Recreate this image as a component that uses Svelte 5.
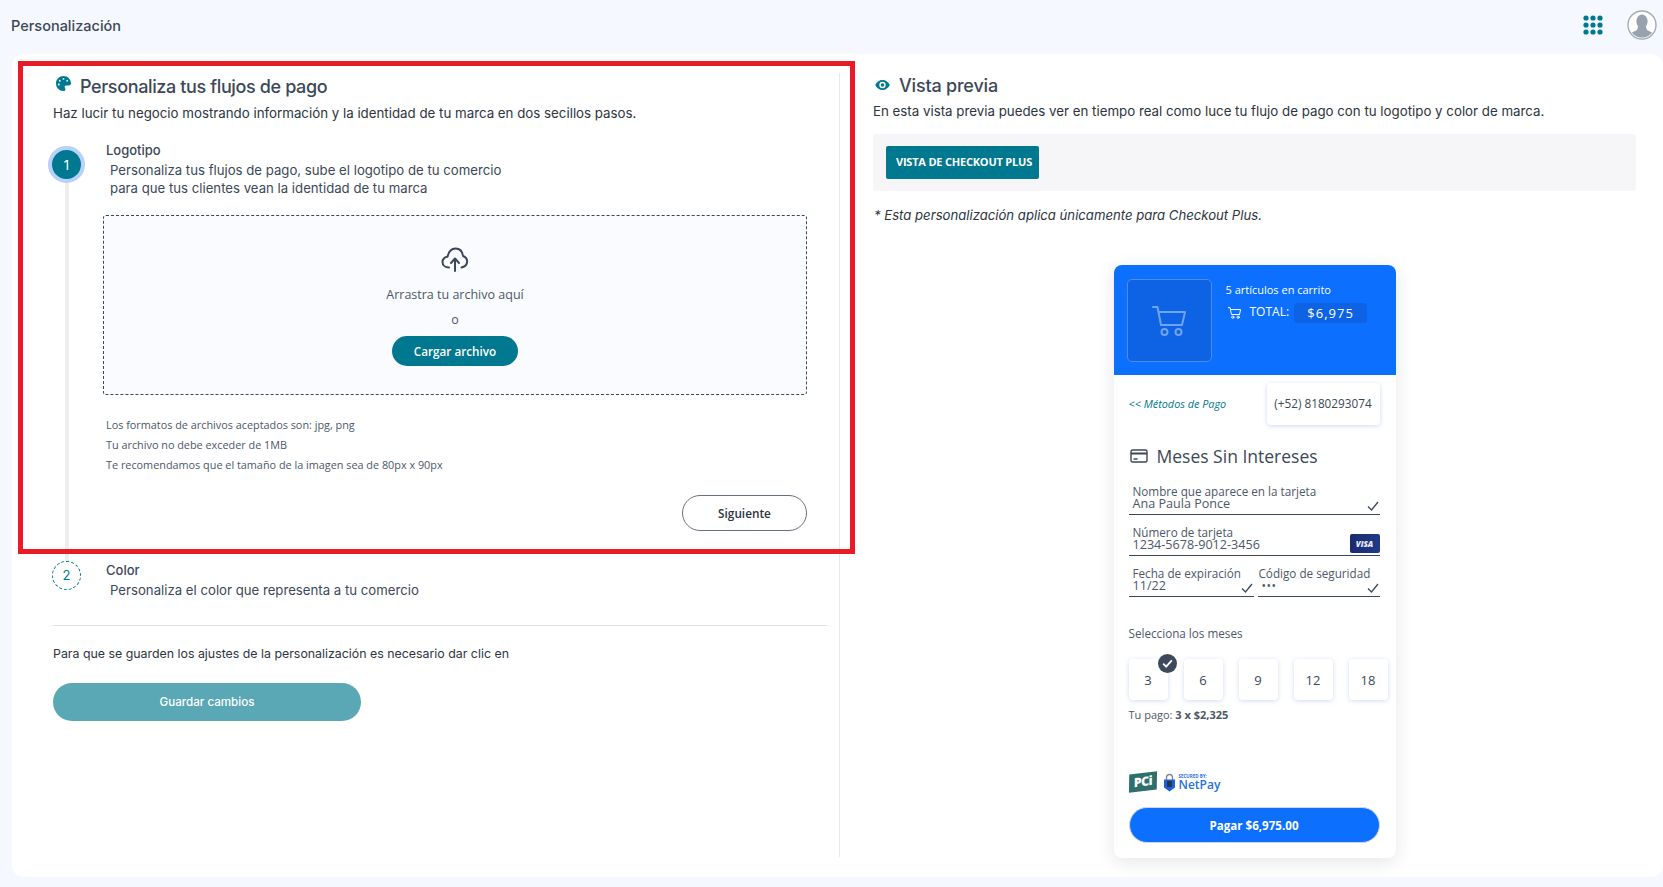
<script lang="ts">
  const months = [3, 6, 9, 12, 18];
  const notes = [
    'Los formatos de archivos aceptados son: jpg, png',
    'Tu archivo no debe exceder de 1MB',
    'Te recomendamos que el tamaño de la imagen sea de 80px x 90px'
  ];
</script>

<div class="page">
  <header class="topbar">
    <span class="topbar__title">Personalización</span>
    <div class="topbar__actions">
      <svg class="apps" viewBox="0 0 20 20" width="20" height="20" aria-label="Aplicaciones">
        {#each [3, 10, 17] as cy}
          {#each [3, 10, 17] as cx}
            <circle {cx} {cy} r="2.6" fill="#00788f" />
          {/each}
        {/each}
      </svg>
      <svg class="avatar" viewBox="0 0 30 30" width="30" height="30" aria-label="Perfil">
        <defs><clipPath id="avatar-clip"><circle cx="15" cy="15" r="12.6" /></clipPath></defs>
        <circle cx="15" cy="15" r="14" fill="#fff" stroke="#a3abb5" stroke-width="1.4" />
        <g clip-path="url(#avatar-clip)" fill="#98a2ae">
          <ellipse cx="15" cy="11.5" rx="5.6" ry="7" />
          <path d="M11 17h8l1 3 6 3v7H4v-7l6-3z" />
        </g>
      </svg>
    </div>
  </header>

  <main class="panel">
    <section class="editor">
      <div class="heading">
        <svg class="heading__palette" viewBox="0 0 512 512" width="15" height="15">
          <path fill="#00788f" d="M512 256c0 .9 0 1.8 0 2.7c-.4 36.5-33.6 61.3-70.1 61.3H344c-26.5 0-48 21.5-48 48c0 3.4 .4 6.7 1 9.9c2.1 10.2 6.5 20 10.8 29.9c6.1 13.8 12.1 27.5 12.1 42c0 31.8-21.6 60.7-53.4 62c-3.5 .1-7 .2-10.6 .2C114.6 512 0 397.4 0 256S114.6 0 256 0S512 114.6 512 256zM128 288a32 32 0 1 0 -64 0 32 32 0 1 0 64 0zm0-96a32 32 0 1 0 0-64 32 32 0 1 0 0 64zM288 96a32 32 0 1 0 -64 0 32 32 0 1 0 64 0zm96 96a32 32 0 1 0 0-64 32 32 0 1 0 0 64z" />
        </svg>
        <h1>Personaliza tus flujos de pago</h1>
      </div>
      <p class="lead">Haz lucir tu negocio mostrando información y la identidad de tu marca en dos secillos pasos.</p>

      <div class="step step--open">
        <div class="step__rail">
          <span class="step__num step__num--active">1</span>
          <span class="step__line"></span>
        </div>
        <div class="step__body">
          <h2>Logotipo</h2>
          <p class="step__desc">Personaliza tus flujos de pago, sube el logotipo de tu comercio<br />para que tus clientes vean la identidad de tu marca</p>

          <div class="dropzone">
            <svg viewBox="0 0 28 25" width="28" height="25" fill="none" stroke="#3c4858" stroke-width="2" stroke-linecap="round" stroke-linejoin="round">
              <path d="M8 20.500C4 20.500 1.500 18 1.500 15C1.500 12 4 9.800 6.500 9.800C7.500 5 10.500 1.500 14.500 1.500C19 1.500 21.500 5 22 9C24.500 10 26.500 12.500 26 15.500C25.500 18.500 23 20 20.500 20.500" />
              <path d="M14 24V12M10 16l4-4.500 4 4.500" />
            </svg>
            <span class="dropzone__text">Arrastra tu archivo aquí</span>
            <span class="dropzone__or">o</span>
            <button class="btn-upload">Cargar archivo</button>
          </div>

          <ul class="notes">
            {#each notes as note}
              <li>{note}</li>
            {/each}
          </ul>

          <div class="step__actions">
            <button class="btn-next">Siguiente</button>
          </div>
        </div>
      </div>

      <div class="step">
        <div class="step__rail">
          <span class="step__num step__num--idle">2</span>
        </div>
        <div class="step__body">
          <h2>Color</h2>
          <p class="step__desc step__desc--single">Personaliza el color que representa a tu comercio</p>
        </div>
      </div>

      <hr />
      <p class="save-hint">Para que se guarden los ajustes de la personalización es necesario dar clic en</p>
      <button class="btn-save">Guardar cambios</button>
    </section>

    <div class="divider"></div>

    <section class="preview">
      <div class="heading heading--preview">
        <svg viewBox="0 0 16 11" width="15" height="10">
          <path fill="#00788f" fill-rule="evenodd" d="M8 0c3.6 0 6.6 2.3 8 5.5C14.600 8.700 11.600 11 8 11S1.400 8.700 0 5.500C1.400 2.300 4.400 0 8 0zm0 2a3.500 3.500 0 1 0 0 7 3.500 3.500 0 0 0 0-7z" />
          <circle cx="8" cy="5.500" r="2" fill="#00788f" />
        </svg>
        <h1>Vista previa</h1>
      </div>
      <p class="lead lead--preview">En esta vista previa puedes ver en tiempo real como luce tu flujo de pago con tu logotipo y color de marca.</p>

      <div class="tabs">
        <button class="tabs__btn">VISTA DE CHECKOUT PLUS</button>
      </div>
      <p class="scope">* Esta personalización aplica únicamente para Checkout Plus.</p>

      <article class="checkout">
        <div class="checkout__head">
          <div class="logo-box">
            <svg viewBox="0 0 34 30" width="34" height="30" fill="none" stroke="#6ea3f0" stroke-width="2" stroke-linecap="round" stroke-linejoin="round">
              <path d="M1 1h4.500l3.500 18h21M6.500 6h26.500l-3 13" />
              <circle cx="12.500" cy="26" r="3" />
              <circle cx="26.500" cy="26" r="3" />
            </svg>
          </div>
          <div class="summary">
            <span class="summary__count">5 artículos en carrito</span>
            <div class="summary__total">
              <svg viewBox="0 0 34 30" width="13" height="12" fill="none" stroke="#fff" stroke-width="2.600" stroke-linecap="round" stroke-linejoin="round">
                <path d="M1 1h4.500l3.500 18h21M6.500 6h26.500l-3 13" />
                <circle cx="12.500" cy="26" r="3" />
                <circle cx="26.500" cy="26" r="3" />
              </svg>
              <span>TOTAL:</span>
              <span class="summary__amount">$6,975</span>
            </div>
          </div>
        </div>

        <div class="checkout__body">
          <div class="checkout__nav">
            <span class="back">&lt;&lt; Métodos de Pago</span>
            <span class="phone">(+52) 8180293074</span>
          </div>

          <div class="method">
            <svg viewBox="0 0 18 14" width="18" height="14" fill="none" stroke="#3c4858" stroke-width="1.400">
              <rect x="1" y="1" width="16" height="12" rx="1.500" />
              <path d="M1 4.500h16" stroke-width="2" />
              <path d="M3.500 10h4" />
            </svg>
            <h3>Meses Sin Intereses</h3>
          </div>

          <div class="field">
            <label for="f-name">Nombre que aparece en la tarjeta</label>
            <span id="f-name" class="field__value">Ana Paula Ponce</span>
            <svg class="tick" viewBox="0 0 12 10" width="12" height="10"><path d="M1 5.500l3.500 3.500L11 1" fill="none" stroke="#3c4858" stroke-width="1.300" /></svg>
          </div>
          <div class="field">
            <label for="f-card">Número de tarjeta</label>
            <span id="f-card" class="field__value">1234-5678-9012-3456</span>
            <span class="visa">VISA</span>
          </div>
          <div class="field-row">
            <div class="field field--exp">
              <label for="f-exp">Fecha de expiración</label>
              <span id="f-exp" class="field__value">11/22</span>
              <svg class="tick" viewBox="0 0 12 10" width="12" height="10"><path d="M1 5.500l3.500 3.500L11 1" fill="none" stroke="#3c4858" stroke-width="1.300" /></svg>
            </div>
            <div class="field field--cvv">
              <label for="f-cvv">Código de seguridad</label>
              <span id="f-cvv" class="field__value field__value--dots">•••</span>
              <svg class="tick" viewBox="0 0 12 10" width="12" height="10"><path d="M1 5.500l3.500 3.500L11 1" fill="none" stroke="#3c4858" stroke-width="1.300" /></svg>
            </div>
          </div>

          <p class="months-label">Selecciona los meses</p>
          <div class="months">
            {#each months as m, i}
              <div class="month">
                {m}
                {#if i === 0}
                  <span class="month__check">
                    <svg viewBox="0 0 12 10" width="11" height="9"><path d="M1.200 5.200l3.300 3.300 6.300-7" fill="none" stroke="#fff" stroke-width="2" /></svg>
                  </span>
                {/if}
              </div>
            {/each}
          </div>
          <p class="pay-line">Tu pago: <b>3 x $2,325</b></p>

          <div class="badges">
            <span class="pci">PCi</span>
            <svg viewBox="0 0 11 19" width="11" height="19">
              <path d="M2.500 7V4.500a3 3 0 0 1 6 0V7" fill="none" stroke="#7d8794" stroke-width="1.300" />
              <path d="M0 6.500h11v8l-5.500 4-5.500-4z" fill="#1b62d6" />
              <rect x="3" y="8" width="5" height="6" fill="#26364f" />
            </svg>
            <div class="netpay">
              <span class="netpay__small">SECURED BY:</span>
              <span class="netpay__name">NetPay</span>
            </div>
          </div>
          <button class="btn-pay">Pagar $6,975.00</button>
        </div>
      </article>
    </section>
  </main>

  <div class="annotation"></div>
</div>

<style>
  :global(body) {
    margin: 0;
    background: #f5f8fe;
    font-family: Inter, 'Open Sans', sans-serif;
    color: #2f3b4a;
  }

  .page {
    position: relative;
    height: 887px;
    overflow: hidden;
    display: flex;
    flex-direction: column;
  }

  .topbar {
    height: 54px;
    flex: none;
    display: flex;
    align-items: center;
    justify-content: space-between;
    padding: 0 6px 4px 11px;
    box-sizing: border-box;
  }

  .topbar__title {
    font-size: 14.5px;
    font-weight: 500;
    color: #3c4858;
  }

  .topbar__actions {
    display: flex;
    align-items: center;
    gap: 24px;
  }

  .panel {
    flex: none;
    height: 823px;
    margin-left: 12px;
    background: #fff;
    border-radius: 12px;
    display: flex;
  }

  .editor {
    width: 828px;
    flex: none;
    box-sizing: border-box;
    padding: 20px 13px 0 41px;
  }

  .divider {
    flex: none;
    width: 1px;
    height: 784px;
    margin: 19px 0 0 -1px;
    background: #e6e8ec;
  }

  .heading {
    display: flex;
    align-items: center;
    gap: 9px;
    padding-left: 3px;
    height: 24px;
  }

  .heading h1 {
    margin: 0;
    font-size: 18px;
    font-weight: 500;
    color: #3c4858;
    letter-spacing: -0.37px;
  }

  .heading__palette {
    margin-top: -5px;
  }

  .lead {
    margin: 5px 0 0;
    font-size: 13.3px;
    line-height: 20px;
    color: #2c3440;
  }

  .step {
    display: flex;
    margin-left: -5px;
  }

  .step--open {
    margin-top: 18px;
  }

  .step__rail {
    width: 37px;
    flex: none;
    display: flex;
    flex-direction: column;
    align-items: center;
  }

  .step__num {
    flex: none;
    box-sizing: border-box;
    border-radius: 50%;
    display: flex;
    align-items: center;
    justify-content: center;
    font-size: 13px;
  }

  .step__num--active {
    margin-top: 5px;
    width: 37px;
    height: 37px;
    background: #00788f;
    color: #fff;
    border: 4px solid #b8d1fa;
  }

  .step__num--idle {
    width: 29px;
    height: 29px;
    color: #00788f;
    border: 1px dashed #00788f;
  }

  .step__line {
    flex: 1;
    width: 4px;
    background: #eeeeee;
  }

  .step__body {
    flex: 1;
    margin-left: 21px;
    min-width: 0;
  }

  .step h2 {
    margin: 0;
    font-size: 13px;
    line-height: 18px;
    font-weight: 500;
    color: #3c4858;
  }

  .step__desc {
    margin: 2px 0 0 4px;
    font-size: 13.2px;
    line-height: 18px;
    color: #3c4858;
  }

  .dropzone {
    margin: 18px 20px 0 -3px;
    height: 180px;
    box-sizing: border-box;
    border: 1px dashed #3c4858;
    border-radius: 3px;
    background: #f9fbff;
    display: flex;
    flex-direction: column;
    align-items: center;
    padding-top: 31px;
    font-family: 'Open Sans', sans-serif;
    color: #4c5868;
  }

  .dropzone__text {
    margin-top: 13px;
    font-size: 12.5px;
    line-height: 20px;
  }

  .dropzone__or {
    margin-top: 5px;
    font-size: 12.5px;
    line-height: 20px;
  }

  .btn-upload {
    margin-top: 6px;
    width: 126px;
    height: 30px;
    border: none;
    border-radius: 15px;
    background: #00788f;
    color: #fff;
    font: 600 11.7px 'Open Sans', sans-serif;
  }

  .notes {
    list-style: none;
    margin: 20px 0 0;
    padding: 0;
    font-family: 'Open Sans', sans-serif;
    font-size: 10.85px;
    line-height: 20.2px;
    color: #4c5868;
  }

  .step__actions {
    margin-top: 19px;
    padding: 0 20px 30px 0;
    display: flex;
    justify-content: flex-end;
  }

  .btn-next {
    width: 125px;
    height: 36px;
    background: #fff;
    border: 1px solid #667080;
    border-radius: 18px;
    color: #2c3440;
    font: 600 11.8px 'Open Sans', sans-serif;
  }

  hr {
    margin: 26px 0 0;
    border: none;
    border-top: 1px solid #e2e2e2;
  }

  .save-hint {
    margin: 18px 0 0;
    font-size: 12.37px;
    line-height: 20px;
    color: #2c3440;
  }

  .btn-save {
    display: block;
    margin-top: 19px;
    width: 308px;
    height: 38px;
    border: none;
    border-radius: 19px;
    background: #5aa7b6;
    color: #fff;
    font: 500 11.6px Inter, sans-serif;
  }

  .preview {
    flex: 1;
    padding: 19px 27px 0 33px;
    min-width: 0;
  }

  .heading--preview {
    padding-left: 2px;
    gap: 9px;
  }

  .heading--preview h1 {
    letter-spacing: -0.2px;
  }

  .lead--preview {
    margin-top: 4px;
  }

  .tabs {
    margin-top: 13px;
    height: 57px;
    box-sizing: border-box;
    padding: 12px 13px;
    background: #f6f6f8;
    border-radius: 3px;
  }

  .tabs__btn {
    width: 153px;
    height: 33px;
    border: none;
    border-radius: 2px;
    background: #00788f;
    color: #fff;
    font: 700 11px 'Open Sans', sans-serif;
    letter-spacing: -0.2px;
    padding: 0 0 2px 3px;
  }

  .scope {
    margin: 14px 0 0 1px;
    font-size: 13.15px;
    line-height: 20px;
    font-style: italic;
    color: #2c3440;
  }

  .checkout {
    margin: 40px auto 0;
    width: 282px;
    height: 593px;
    border-radius: 8px;
    overflow: hidden;
    background: #fff;
    box-shadow: 0 4px 18px rgba(40, 50, 70, 0.12);
    font-family: 'Open Sans', sans-serif;
    color: #3c4858;
  }

  .checkout__head {
    height: 110px;
    box-sizing: border-box;
    padding: 14px 13px;
    background: #0c6ffe;
    display: flex;
    gap: 14px;
    color: #fff;
  }

  .logo-box {
    width: 85px;
    height: 83px;
    box-sizing: border-box;
    flex: none;
    display: flex;
    align-items: center;
    justify-content: center;
    background: #0e63e4;
    border: 1px solid #4d8ceb;
    border-radius: 5px;
  }

  .summary {
    display: flex;
    flex-direction: column;
    padding-top: 1px;
    font-size: 11px;
  }

  .summary__count {
    line-height: 20px;
  }

  .summary__total {
    display: flex;
    align-items: center;
    margin-top: 3px;
    padding-left: 2px;
    font-size: 12px;
  }

  .summary__total span:first-of-type {
    margin: -3px 0 0 9px;
  }

  .summary__amount {
    width: 73px;
    height: 20px;
    margin-left: 5px;
    border-radius: 3px;
    background: #0e63e4;
    text-align: center;
    font-size: 13px;
    line-height: 20px;
    letter-spacing: 1px;
  }

  .checkout__body {
    padding: 8px 15px 0 15px;
    width: 251px;
  }

  .checkout__nav {
    display: flex;
    align-items: center;
    justify-content: space-between;
  }

  .back {
    margin-top: -2px;
    font-size: 10.85px;
    font-style: italic;
    color: #00788f;
  }

  .phone {
    width: 113px;
    height: 42px;
    box-sizing: border-box;
    padding-bottom: 2px;
    border-radius: 4px;
    background: #fff;
    box-shadow: 0 1px 5px rgba(90, 130, 200, 0.3);
    display: flex;
    align-items: center;
    justify-content: center;
    font-size: 11.75px;
  }

  .method {
    display: flex;
    align-items: center;
    gap: 9px;
    margin: 20px 0 11px;
    padding-left: 1px;
  }

  .method h3 {
    margin: 0;
    font-size: 17.5px;
    line-height: 22px;
    font-weight: 400;
    color: #3c4858;
  }

  .field {
    position: relative;
    height: 37px;
    box-sizing: border-box;
    padding: 7px 0 0 4px;
    border-bottom: 1px solid #3c4858;
    display: flex;
    flex-direction: column;
    font-size: 11.7px;
    line-height: 12px;
    margin-top: 4px;
  }

  .field label {
    color: #4c5868;
  }

  .field__value {
    margin-top: 1px;
    font-size: 12.6px;
    color: #4c5868;
  }

  .field__value--dots {
    font-size: 12px;
    letter-spacing: 0.5px;
    padding-left: 3px;
  }

  .tick {
    position: absolute;
    right: 1px;
    bottom: 3px;
  }

  .visa {
    position: absolute;
    right: 0;
    bottom: 2px;
    width: 30px;
    height: 19px;
    border-radius: 2px;
    background: linear-gradient(90deg, #1c2a6e, #1f3a8a);
    color: #e8ecf6;
    font-size: 8px;
    font-weight: 800;
    font-style: italic;
    text-align: center;
    line-height: 19px;
  }

  .field-row {
    display: flex;
    gap: 4px;
  }

  .field--exp {
    width: 125px;
    flex: none;
  }

  .field--cvv {
    flex: 1;
    padding-left: 1px;
  }

  .months-label {
    margin: 27px 0 0;
    font-size: 11.7px;
    line-height: 18px;
    color: #4c5868;
  }

  .months {
    display: flex;
    gap: 16px;
    margin-top: 17px;
  }

  .month {
    position: relative;
    flex: none;
    width: 39px;
    height: 41px;
    border-radius: 4px;
    background: #fff;
    box-shadow: 0 1px 5px rgba(90, 130, 200, 0.28);
    display: flex;
    align-items: center;
    justify-content: center;
    font-size: 13px;
  }

  .month__check {
    position: absolute;
    top: -5px;
    right: -9px;
    width: 19px;
    height: 19px;
    border-radius: 50%;
    background: #3c4a5c;
    display: flex;
    align-items: center;
    justify-content: center;
  }

  .pay-line {
    margin: 7px 0 0;
    font-size: 11px;
    line-height: 16px;
    color: #4c5868;
  }

  .badges {
    display: flex;
    align-items: center;
    gap: 7px;
    margin-top: 48px;
    height: 22px;
  }

  .pci {
    width: 28px;
    height: 18px;
    background: #2f6f6b;
    color: #fff;
    font: 800 12.5px 'Open Sans', sans-serif;
    line-height: 18px;
    text-align: center;
    transform: rotate(-7deg) skewX(-8deg);
    letter-spacing: -0.5px;
  }

  .netpay {
    display: flex;
    flex-direction: column;
    margin-left: -3px;
    color: #2a6fe0;
  }

  .netpay__small {
    font-size: 4.5px;
    line-height: 6px;
    font-weight: 700;
  }

  .netpay__name {
    font: 600 12px/12px 'Open Sans', sans-serif;
  }

  .btn-pay {
    display: block;
    margin-top: 14px;
    width: 251px;
    height: 36px;
    border-radius: 18px;
    border: 1px solid #cdd7ea;
    background: #0c6ffe;
    color: #fff;
    font: 700 11.6px 'Open Sans', sans-serif;
  }

  .annotation {
    position: absolute;
    left: 18px;
    top: 61px;
    width: 837px;
    height: 493px;
    box-sizing: border-box;
    border: 5px solid #e81c24;
    pointer-events: none;
  }
</style>
